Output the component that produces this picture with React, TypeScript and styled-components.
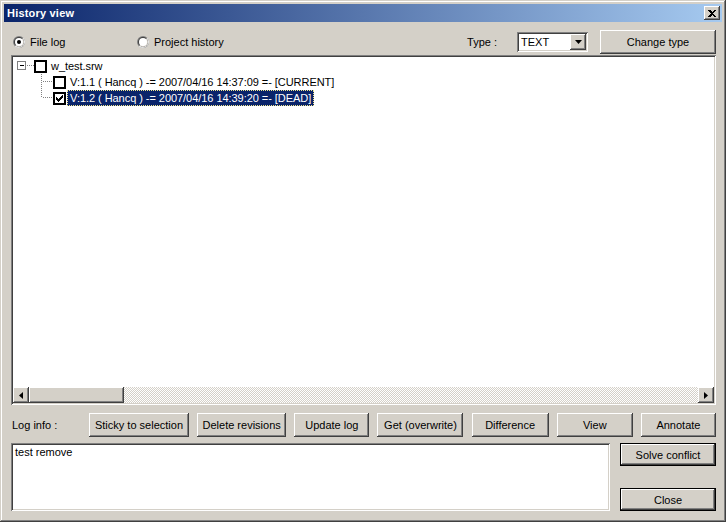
import React from 'react';
import styled, { createGlobalStyle } from 'styled-components';

const FACE = '#D4D0C8';

const GlobalStyle = createGlobalStyle`
  html, body {
    margin: 0;
    padding: 0;
    background: ${FACE};
  }
  body {
    font-family: 'Liberation Sans', Arial, sans-serif;
    font-size: 11px;
    color: #000;
  }
`;

const raised = `
  box-shadow: inset -1px -1px #404040, inset 1px 1px #fff,
    inset -2px -2px #808080, inset 2px 2px ${FACE};
`;

const sunken = `
  box-shadow: inset 1px 1px #808080, inset -1px -1px #fff,
    inset 2px 2px #404040, inset -2px -2px ${FACE};
`;

const Window = styled.div`
  width: 726px;
  height: 522px;
  box-sizing: border-box;
  padding: 4px;
  background: ${FACE};
  box-shadow: inset -1px -1px #404040, inset 1px 1px ${FACE},
    inset -2px -2px #808080, inset 2px 2px #fff;
  display: flex;
  flex-direction: column;
`;

const TitleBar = styled.div`
  height: 18px;
  flex: none;
  display: flex;
  align-items: center;
  padding: 0 2px 0 3px;
  background: linear-gradient(to right, #0a246a, #a6caf0);
`;

const Title = styled.span`
  flex: 1;
  color: #fff;
  font-weight: bold;
  font-size: 11px;
  letter-spacing: 0.2px;
`;

const CloseBox = styled.div`
  width: 16px;
  height: 14px;
  background: ${FACE};
  ${raised}
  display: flex;
  align-items: center;
  justify-content: center;
`;

const Body = styled.div`
  flex: 1;
  display: flex;
  flex-direction: column;
  padding: 8px 6px 0 7px;
`;

const TopRow = styled.div`
  height: 23px;
  display: flex;
  align-items: center;
  margin-bottom: 2px;
`;

const RadioOption = styled.label<{ $w: number }>`
  width: ${({ $w }) => $w}px;
  display: flex;
  align-items: center;
  gap: 5px;
  margin-left: 2px;
`;

const Spacer = styled.div`
  flex: 1;
`;

const TypeLabel = styled.span`
  margin-right: 20px;
`;

const Select = styled.div`
  width: 71px;
  height: 20px;
  box-sizing: border-box;
  padding: 2px;
  background: #fff;
  ${sunken}
  display: flex;
  align-items: center;
  margin-right: 12px;
`;

const SelectText = styled.span`
  flex: 1;
  padding-left: 2px;
`;

const SmallBtn = styled.div`
  width: 16px;
  height: 16px;
  background: ${FACE};
  ${raised}
  display: flex;
  align-items: center;
  justify-content: center;
  flex: none;
`;

const Button = styled.div<{ $w: number; $default?: boolean }>`
  width: ${({ $w }) => $w}px;
  height: ${({ $default }) => ($default ? 23 : 24)}px;
  box-sizing: border-box;
  background: ${FACE};
  display: flex;
  align-items: center;
  justify-content: center;
  white-space: nowrap;
  ${({ $default }) =>
    $default
      ? `border: 1px solid #000;
         box-shadow: inset -1px -1px #404040, inset 1px 1px #fff, inset -2px -2px #808080;`
      : raised}
`;

const Tree = styled.div`
  height: 350px;
  box-sizing: border-box;
  padding: 2px;
  background: #fff;
  ${sunken}
  display: flex;
  flex-direction: column;
`;

const TreeItems = styled.div`
  flex: 1;
  padding-top: 1px;
`;

const Row = styled.div`
  height: 16px;
  display: flex;
  align-items: center;
`;

const Check = styled.div`
  width: 13px;
  height: 13px;
  box-sizing: border-box;
  border: 2px solid #000;
  background: #fff;
  margin-right: 1px;
  display: flex;
  align-items: center;
  justify-content: center;
  flex: none;
`;

const NodeLabel = styled.span<{ $selected?: boolean }>`
  line-height: 14px;
  padding: 0 2px;
  border: 1px ${({ $selected }) => ($selected ? 'dotted #f0e68c' : 'solid transparent')};
  background: ${({ $selected }) => ($selected ? '#0a246a' : 'transparent')};
  color: ${({ $selected }) => ($selected ? '#fff' : '#000')};
  white-space: nowrap;
  letter-spacing: -0.05px;
`;

const HScroll = styled.div`
  height: 16px;
  display: flex;
  flex: none;
`;

const Thumb = styled.div`
  width: 95px;
  height: 16px;
  background: ${FACE};
  ${raised}
  flex: none;
`;

const Track = styled.div`
  flex: 1;
  background: repeating-conic-gradient(#fff 0 25%, ${FACE} 0 50%) 0 0 / 2px 2px;
`;

const ActionRow = styled.div`
  margin-top: 8px;
  height: 24px;
  display: flex;
  align-items: center;
`;

const LogLabel = styled.span`
  width: 78px;
  flex: none;
  padding-left: 1px;
  box-sizing: border-box;
`;

const ActionButtons = styled.div`
  flex: 1;
  display: flex;
  justify-content: space-between;
`;

const BottomRow = styled.div`
  margin-top: 6px;
  height: 68px;
  display: flex;
`;

const LogText = styled.div`
  width: 599px;
  box-sizing: border-box;
  padding: 3px 4px;
  background: #fff;
  ${sunken}
`;

const SideButtons = styled.div`
  margin-left: auto;
  display: flex;
  flex-direction: column;
  justify-content: space-between;
`;

const Radio: React.FC<{ checked?: boolean }> = ({ checked }) => (
  <svg width="12" height="12" viewBox="0 0 12 12">
    <circle cx="6" cy="6" r="6" fill="#808080" />
    <path d="M10.24 1.76 A6 6 0 0 1 1.76 10.24 Z" fill="#fff" />
    <circle cx="6" cy="6" r="5" fill="#404040" />
    <path d="M9.54 2.46 A5 5 0 0 1 2.46 9.54 Z" fill={FACE} />
    <circle cx="6" cy="6" r="4" fill="#fff" />
    {checked && <circle cx="6" cy="6" r="2" fill="#000" />}
  </svg>
);

const Arrow: React.FC<{ dir: 'down' | 'left' | 'right' }> = ({ dir }) => {
  const pts =
    dir === 'down' ? '0,0 7,0 3.5,4' : dir === 'left' ? '4,0 4,7 0,3.5' : '0,0 0,7 4,3.5';
  const w = dir === 'down' ? 7 : 4;
  const h = dir === 'down' ? 4 : 7;
  return (
    <svg width={w} height={h} viewBox={`0 0 ${w} ${h}`}>
      <polygon points={pts} fill="#000" />
    </svg>
  );
};

type Item = {
  label: string;
  level: number;
  checked: boolean;
  selected?: boolean;
  last?: boolean;
};

const items: Item[] = [
  { label: 'w_test.srw', level: 0, checked: false },
  { label: 'V:1.1 ( Hancq ) -= 2007/04/16 14:37:09 =- [CURRENT]', level: 1, checked: false },
  {
    label: 'V:1.2 ( Hancq ) -= 2007/04/16 14:39:20 =- [DEAD]',
    level: 1,
    checked: true,
    selected: true,
    last: true,
  },
];

const Gutter: React.FC<{ item: Item }> = ({ item }) =>
  item.level === 0 ? (
    <svg width="21" height="16" viewBox="0 0 21 16" shapeRendering="crispEdges">
      <rect x="4.5" y="3.5" width="8" height="8" fill="#fff" stroke="#808080" />
      <line x1="6.5" y1="7.5" x2="11" y2="7.5" stroke="#000" />
      <line x1="14" y1="7.5" x2="21" y2="7.5" stroke="#808080" strokeDasharray="1 1" />
    </svg>
  ) : (
    <svg width="40" height="16" viewBox="0 0 40 16" shapeRendering="crispEdges">
      <line
        x1="28.5"
        y1="0"
        x2="28.5"
        y2={item.last ? 8 : 16}
        stroke="#808080"
        strokeDasharray="1 1"
      />
      <line x1="30" y1="7.5" x2="40" y2="7.5" stroke="#808080" strokeDasharray="1 1" />
    </svg>
  );

const actions: [string, number][] = [
  ['Sticky to selection', 100],
  ['Delete revisions', 89],
  ['Update log', 75],
  ['Get (overwrite)', 86],
  ['Difference', 77],
  ['View', 76],
  ['Annotate', 75],
];

export default function App() {
  return (
    <>
      <GlobalStyle />
      <Window>
        <TitleBar>
          <Title>History view</Title>
          <CloseBox>
            <svg width="8" height="7" viewBox="0 0 8 7" shapeRendering="crispEdges">
              <path d="M0 0h2l2 2 2-2h2L5 3.5 8 7H6L4 5 2 7H0l3-3.5z" fill="#000" />
            </svg>
          </CloseBox>
        </TitleBar>
        <Body>
          <TopRow>
            <RadioOption $w={122}>
              <Radio checked />
              File log
            </RadioOption>
            <RadioOption $w={120}>
              <Radio />
              Project history
            </RadioOption>
            <Spacer />
            <TypeLabel>Type :</TypeLabel>
            <Select>
              <SelectText>TEXT</SelectText>
              <SmallBtn>
                <Arrow dir="down" />
              </SmallBtn>
            </Select>
            <Button $w={116}>Change type</Button>
          </TopRow>
          <Tree>
            <TreeItems>
              {items.map((it) => (
                <Row key={it.label}>
                  <Gutter item={it} />
                  <Check>
                    {it.checked && (
                      <svg width="7" height="7" viewBox="0 0 7 7" shapeRendering="crispEdges">
                        <path d="M0 2h1v1h1v1h1V3h1V2h1V1h1V0h1v3H6v1H5v1H4v1H3v1H2V6H1V5H0z" fill="#000" />
                      </svg>
                    )}
                  </Check>
                  <NodeLabel $selected={it.selected}>{it.label}</NodeLabel>
                </Row>
              ))}
            </TreeItems>
            <HScroll>
              <SmallBtn>
                <Arrow dir="left" />
              </SmallBtn>
              <Thumb />
              <Track />
              <SmallBtn>
                <Arrow dir="right" />
              </SmallBtn>
            </HScroll>
          </Tree>
          <ActionRow>
            <LogLabel>Log info :</LogLabel>
            <ActionButtons>
              {actions.map(([label, w]) => (
                <Button key={label} $w={w}>
                  {label}
                </Button>
              ))}
            </ActionButtons>
          </ActionRow>
          <BottomRow>
            <LogText>test remove</LogText>
            <SideButtons>
              <Button $w={96} $default>
                Solve conflict
              </Button>
              <Button $w={96} $default>
                Close
              </Button>
            </SideButtons>
          </BottomRow>
        </Body>
      </Window>
    </>
  );
}
